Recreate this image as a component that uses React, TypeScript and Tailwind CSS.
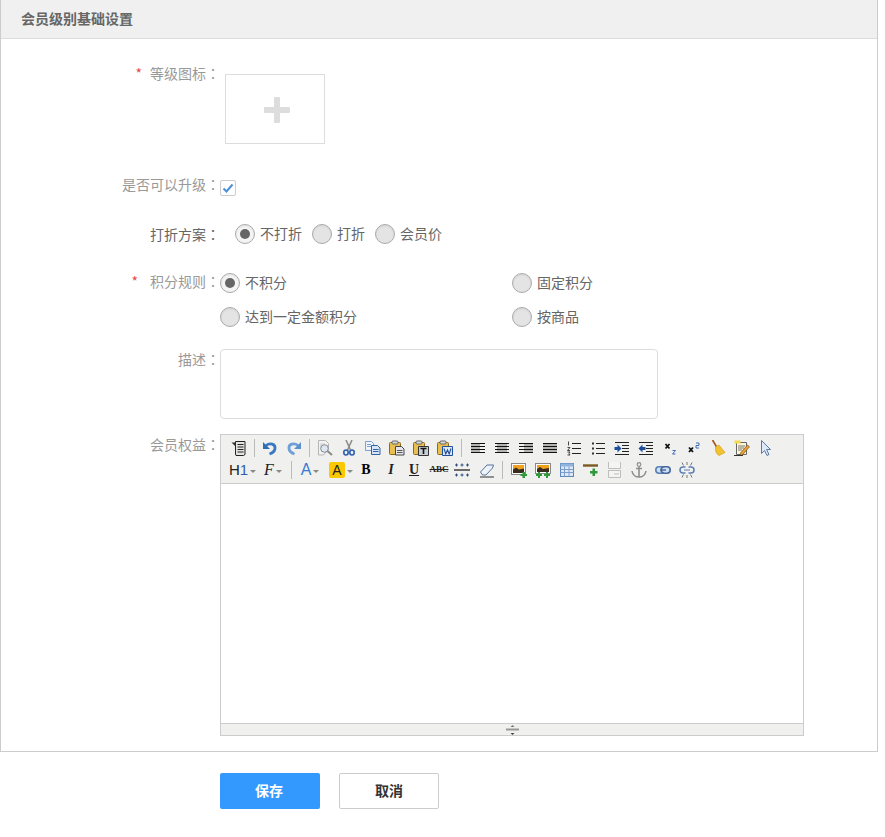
import * as React from "react"

const cjk = "font-['Microsoft_YaHei','Noto_Sans_CJK_SC',sans-serif]"

function Ico({ children }: { children: React.ReactNode }) {
  return (
    <svg width="16" height="16" viewBox="0 0 16 16" fill="none">
      {children}
    </svg>
  )
}

function Lines({ rows }: { rows: [number, number][] }) {
  return (
    <Ico>
      {rows.map(([x1, x2], i) => (
        <path key={i} d={`M${x1} ${3.5 + i * 1.5}H${x2}`} stroke={i % 2 ? "#777" : "#111"} strokeWidth="1" />
      ))}
    </Ico>
  )
}

const clip = (
  <>
    <rect x=".5" y="2.500" width="11" height="12" rx="1" fill="#e9bf52" stroke="#8a6a1f" />
    <rect x="3" y="1" width="6" height="3" rx="1" fill="#d9d9d9" stroke="#666" />
  </>
)

const icons: Record<string, React.ReactNode> = {
  source: (
    <Ico>
      <path d="M4.500 1.500h9.500v12.500c0 .8-.7 1.500-1.500 1.500h-7.500l-.5-1.500z" fill="#e4e4e4" stroke="#222" />
      <path d="M6.500 4.500h6M6.500 7h6M6.500 9.500h6M6.500 12h6" stroke="#222" />
      <path d="M.5 2.500l4 0v4z" fill="#333" />
    </Ico>
  ),
  undo: (
    <Ico>
      <path d="M4 5.500c4-3 9.500-1.500 9 3 -.3 2.800-2.500 4.500-5.500 5.500" stroke="#3b78c2" strokeWidth="2.800" />
      <path d="M1 2v7h7z" fill="#2f6db5" />
    </Ico>
  ),
  redo: (
    <Ico>
      <path d="M12 5.500c-4-3-9.500-1.500-9 3 .3 2.800 2.500 4.500 5.500 5.500" stroke="#6f9fd8" strokeWidth="2.800" />
      <path d="M15 2v7h-7z" fill="#5c8fcc" />
    </Ico>
  ),
  preview: (
    <Ico>
      <path d="M1.500.5h7l3 3v6l-5 5.500h-5z" fill="#f2f2f2" stroke="#b5b5b5" />
      <path d="M3 4h5M3 6h3M3 8h2" stroke="#ccc" />
      <circle cx="7.500" cy="8.500" r="3.800" fill="#dbe7f3" stroke="#8a8a8a" />
      <path d="M10.500 11l4.500 4" stroke="#8a8a8a" strokeWidth="2" />
    </Ico>
  ),
  cut: (
    <Ico>
      <path d="M5 0l4.500 10M11 0l-4.500 10" stroke="#8a8a8a" strokeWidth="1.500" />
      <ellipse cx="5" cy="12.500" rx="2.200" ry="2.500" stroke="#2f5fb0" strokeWidth="1.600" />
      <ellipse cx="11" cy="12.500" rx="2.200" ry="2.500" stroke="#2f5fb0" strokeWidth="1.600" />
    </Ico>
  ),
  copy: (
    <Ico>
      <path d="M.5 1.500h6l2 2v7h-8z" fill="#eef4fb" stroke="#7d9fcc" />
      <path d="M2 4.500h4M2 6.500h4" stroke="#7d9fcc" />
      <path d="M6.500 5.500h6l2.500 2.500v6.500h-8.500z" fill="#d5e4f6" stroke="#34639f" />
      <path d="M8 9.500h5.500M8 11.500h5.500" stroke="#34639f" />
    </Ico>
  ),
  paste: (
    <Ico>
      {clip}
      <path d="M6.500 6.500h6l2.500 2.500v6h-8.500z" fill="#e4e8ee" stroke="#444" />
      <path d="M8 10.500h5.500M8 12.500h5.500" stroke="#555" />
    </Ico>
  ),
  pasteText: (
    <Ico>
      {clip}
      <path d="M5.500 6.500h10v9h-10z" fill="#c9ced6" stroke="#333" />
      <path d="M7.500 8.500h6M10.500 8.500v5.500" stroke="#111" strokeWidth="1.600" />
    </Ico>
  ),
  pasteWord: (
    <Ico>
      {clip}
      <path d="M5.500 6.500h10v9h-10z" fill="#dfe8f5" stroke="#1f4f9a" />
      <path d="M7 8.500l1.800 5.500 1.700-4 1.700 4 1.800-5.500" stroke="#1f4f9a" strokeWidth="1.100" />
    </Ico>
  ),
  left: <Lines rows={[[1, 15], [1, 10], [1, 15], [1, 10], [1, 15], [1, 10], [1, 15]]} />,
  center: <Lines rows={[[1, 15], [3, 13], [1, 15], [3, 13], [1, 15], [3, 13], [1, 15]]} />,
  right: <Lines rows={[[1, 15], [6, 15], [1, 15], [6, 15], [1, 15], [6, 15], [1, 15]]} />,
  justify: <Lines rows={[[1, 15], [1, 15], [1, 15], [1, 15], [1, 15], [1, 15], [1, 15]]} />,
  ol: (
    <Ico>
      <path d="M6 3.500h9M6 8.500h9M6 13.500h9" stroke="#222" />
      <path d="M2.500 1.500v4M1.500 7.500h2.500l-2.500 3h2.500M1.500 12h2.500l-1 1.500 1 1.500h-2.500" stroke="#333" strokeWidth=".9" />
    </Ico>
  ),
  ul: (
    <Ico>
      <path d="M6 3.500h9M6 8.500h9M6 13.500h9" stroke="#222" />
      <path d="M2 2.500h2v2h-2zM2 7.500h2v2h-2zM2 12.500h2v2h-2z" fill="#333" />
    </Ico>
  ),
  indent: (
    <Ico>
      <path d="M1 2.500h14M8 5.500h7M8 8.500h7M8 11.500h7M1 14.500h14" stroke="#222" />
      <path d="M.5 7h3v-2.500l4 4-4 4v-2.500h-3z" fill="#1f4f9a" />
    </Ico>
  ),
  outdent: (
    <Ico>
      <path d="M1 2.500h14M8 5.500h7M8 8.500h7M8 11.500h7M1 14.500h14" stroke="#222" />
      <path d="M7.500 7h-3v-2.500l-4 4 4 4v-2.500h3z" fill="#1f4f9a" />
    </Ico>
  ),
  sub: (
    <Ico>
      <path d="M3.500 4l4 4.500M7.500 4l-4 4.500" stroke="#111" strokeWidth="1.800" />
      <path d="M10.500 10.500h3l-3 3.500h3" stroke="#2f5fb0" strokeWidth=".9" />
    </Ico>
  ),
  sup: (
    <Ico>
      <path d="M3 7.500l4 4.500M7 7.500l-4 4.500" stroke="#111" strokeWidth="1.800" />
      <path d="M10 3h3v2.500h-3v2.500h3" stroke="#2f5fb0" strokeWidth=".9" />
    </Ico>
  ),
  broom: (
    <Ico>
      <path d="M2.500 0l4.500 7.500" stroke="#a5521c" strokeWidth="1.600" />
      <path d="M5.500 7l3.500-2 6 7.500-6 3c-2.500-1.500-4-4-3.500-8.500z" fill="#f2c230" stroke="#d49c1a" strokeWidth=".6" />
    </Ico>
  ),
  template: (
    <Ico>
      <path d="M2.500 2.500h10v12h-10z" fill="#fff6d6" stroke="#666" />
      <path d="M.5 .5h6v3h-6z" fill="#f7da4f" />
      <path d="M4 6h7M4 8h6M4 10h4" stroke="#777" />
      <path d="M6.500 13l7-8 2 1.800-7 8-2.500.7z" fill="#e7a338" stroke="#7a4f17" strokeWidth=".7" />
      <path d="M0 15.500h9" stroke="#333" />
    </Ico>
  ),
  cursor: (
    <Ico>
      <path d="M3.500 .5l9 9h-4l2.500 5-2 1-2.500-5-3 3z" fill="#dfe9f7" stroke="#5b7aa6" />
    </Ico>
  ),
  image: (
    <Ico>
      <rect x=".5" y="1.500" width="14" height="11" fill="#fff" stroke="#888" />
      <rect x="2" y="3" width="11" height="8" fill="#f0a21f" />
      <path d="M2 7.500l3-2 3 2 5-1v4.500h-11z" fill="#3a2c1c" />
      <path d="M9.500 12h2v-2h2.500v2h2v2h-2v2h-2.500v-2h-2z" fill="#2f9a3a" />
    </Ico>
  ),
  images: (
    <Ico>
      <rect x=".5" y="1.500" width="15" height="10" fill="#fff" stroke="#888" />
      <rect x="2" y="3" width="12" height="7" fill="#f0a21f" />
      <path d="M2 7l3-2 3 2 6-1v4h-12z" fill="#3a2c1c" />
      <path d="M1 12h2v-2h2v2h2v2h-2v2h-2v-2h-2zM9 12h2v-2h2v2h2v2h-2v2h-2v-2h-2z" fill="#2f9a3a" />
    </Ico>
  ),
  table: (
    <Ico>
      <rect x="1.500" y="1.500" width="13" height="13" fill="#dce8f7" stroke="#5c86bd" />
      <path d="M1.500 1.500h13v3h-13z" fill="#8fb2de" />
      <path d="M1.500 7.500h13M1.500 10.500h13M5.500 4.500v10M10 4.500v10" stroke="#7c9ecb" />
    </Ico>
  ),
  hr: (
    <Ico>
      <path d="M0 3.500h15" stroke="#7a5a22" strokeWidth="2.400" />
      <path d="M7 9h2.500v-2.500h2.500v2.500h2.500v2.500h-2.500v2.500h-2.500v-2.500h-2.500z" fill="#2f9a3a" />
    </Ico>
  ),
  pagebreak: (
    <Ico>
      <path d="M1.500 0v6.500h12v-6.500M1.500 15.500v-7h12v7z" fill="#f4f4f2" stroke="#bdbdbd" />
      <path d="M7 12h5" stroke="#bdbdbd" />
    </Ico>
  ),
  anchor: (
    <Ico>
      <circle cx="8" cy="2.500" r="1.800" stroke="#8e8e8e" strokeWidth="1.200" />
      <path d="M8 4.500v10.500M5 6.500h6M1 9c.5 3.500 3.500 6 7 6s6.500-2.500 7-6" stroke="#8e8e8e" strokeWidth="1.600" />
    </Ico>
  ),
  link: (
    <Ico>
      <rect x=".8" y="4.800" width="9" height="6.400" rx="3.200" fill="#cfdff2" stroke="#5a7fb5" strokeWidth="1.600" />
      <rect x="6.200" y="4.800" width="9" height="6.400" rx="3.200" fill="#cfdff2" stroke="#44669b" strokeWidth="1.600" />
      <path d="M5 8h6" stroke="#44669b" strokeWidth="1.400" />
    </Ico>
  ),
  unlink: (
    <Ico>
      <path d="M6.500 5h-2.500a3 3 0 0 0 0 6h2.500M9.500 5h2.500a3 3 0 0 1 0 6h-2.500" stroke="#5a7fb5" strokeWidth="1.500" />
      <path d="M5 8h6" stroke="#5a7fb5" />
      <path d="M8 0v3M8 13v3M3 .5l1.500 3M13 .5l-1.500 3M3 15.500l1.500-3M13 15.500l-1.500-3" stroke="#555" strokeWidth=".8" />
    </Ico>
  ),
}

function ToolBtn({ name, className }: { name: string; className?: string }) {
  return <div className={`flex h-[22px] w-6 shrink-0 items-center justify-center ${className ?? ""}`}>{icons[name]}</div>
}

function Sep({ className }: { className?: string }) {
  return <div className={`h-[18px] w-px shrink-0 bg-[#bbb] ${className ?? "mx-[3px]"}`} />
}

function Caret() {
  return <span className="ml-[2px] mt-[3px] h-0 w-0 border-x-[3px] border-t-[3px] border-x-transparent border-t-[#888]" />
}

function TextBtn({ children, className }: { children: React.ReactNode; className: string }) {
  return <div className={`flex h-[22px] shrink-0 items-center justify-center ${className}`}>{children}</div>
}

function Radio({ checked }: { checked?: boolean }) {
  return (
    <span
      className={`flex h-5 w-5 shrink-0 items-center justify-center rounded-full border border-[#aaa] shadow-[inset_0_1px_2px_rgba(0,0,0,0.08)] ${
        checked ? "bg-[#f4f4f4]" : "bg-[#e4e4e4]"
      }`}
    >
      {checked && <span className="h-[10px] w-[10px] rounded-full bg-[#666]" />}
    </span>
  )
}

function RadioItem({ label, checked }: { label: string; checked?: boolean }) {
  return (
    <div className="flex h-5 items-center gap-[5px]">
      <Radio checked={checked} />
      <span className="mb-[2px] text-sm leading-5 text-[#666]">{label}</span>
    </div>
  )
}

function Label({
  text,
  star,
  dark,
  offset = "-mt-px",
}: {
  text: string
  star?: "near" | "far"
  dark?: boolean
  offset?: string
}) {
  return (
    <div className={`w-[220px] shrink-0 text-right text-sm leading-5 ${offset} ${dark ? "text-[#666]" : "text-[#999]"}`}>
      {star && <span className={`text-[#e8484d] ${star === "near" ? "mr-2" : "mr-3"}`}>*</span>}
      {text}
      <span className="font-['Noto_Sans_CJK_TC',sans-serif]">：</span>
    </div>
  )
}

export default function App() {
  return (
    <div className={`h-[837px] w-[885px] bg-white ${cjk}`}>
      <div className="h-[752px] w-[878px] border-x border-b border-[#ccc]">
        <div className="flex h-[39px] items-center border-b border-[#ddd] bg-[#f0f0f0] pb-[2px] pl-5 text-sm font-bold text-[#666]">
          会员级别基础设置
        </div>

        <div className="-ml-px flex pt-[25px]">
          <Label text="等级图标" star="near" />
          <div className="ml-[5px] mt-[10px] flex h-[70px] w-[100px] items-center justify-center border border-[#ddd]">
            <div className="relative ml-[3px] mt-[1px] h-[26px] w-[26px]">
              <div className="absolute left-0 top-[10px] h-[6px] w-[26px] rounded-[1px] bg-[#ddd]" />
              <div className="absolute left-[10px] top-0 h-[26px] w-[6px] rounded-[1px] bg-[#ddd]" />
            </div>
          </div>
        </div>

        <div className="-ml-px mt-[31px] flex">
          <Label text="是否可以升级" />
          <span className="mt-[5px] flex h-4 w-4 items-center justify-center rounded-[2px] border border-[#ccc] bg-white">
            <svg width="12" height="12" viewBox="0 0 12 12" fill="none">
              <path d="M1.500 6.500l3 3 6-7" stroke="#4a8fd8" strokeWidth="2" />
            </svg>
          </span>
        </div>

        <div className="-ml-px mt-[28px] flex">
          <Label text="打折方案" dark offset="mt-0" />
          <div className="ml-[15px] flex gap-[10px]">
            <RadioItem label="不打折" checked />
            <RadioItem label="打折" />
            <RadioItem label="会员价" />
          </div>
        </div>

        <div className="-ml-px mt-[29px] flex">
          <Label text="积分规则" star="far" offset="-mt-[2px]" />
          <div className="grid h-[54px] w-[400px] grid-cols-[292px_1fr] gap-y-[14px]">
            <RadioItem label="不积分" checked />
            <RadioItem label="固定积分" />
            <RadioItem label="达到一定金额积分" />
            <RadioItem label="按商品" />
          </div>
        </div>

        <div className="-ml-px mt-[22px] flex">
          <Label text="描述" offset="mt-0" />
          <div className="h-[70px] w-[438px] rounded-[4px] border border-[#ddd]" />
        </div>

        <div className="-ml-px mt-[15px] flex">
          <Label text="会员权益" offset="mt-0" />
          <div className="flex h-[302px] w-[584px] flex-col border border-[#ccc]">
            <div className="h-[49px] border-b border-[#ccc] bg-[#f0f0ee] pl-[6px] pt-[2px]">
              <div className="flex h-[22px] items-center">
                <ToolBtn name="source" />
                <Sep />
                <ToolBtn name="undo" />
                <ToolBtn name="redo" />
                <Sep />
                <ToolBtn name="preview" />
                <ToolBtn name="cut" />
                <ToolBtn name="copy" />
                <ToolBtn name="paste" />
                <ToolBtn name="pasteText" />
                <ToolBtn name="pasteWord" />
                <Sep className="mx-1" />
                <ToolBtn name="left" />
                <ToolBtn name="center" />
                <ToolBtn name="right" />
                <ToolBtn name="justify" />
                <ToolBtn name="ol" />
                <ToolBtn name="ul" />
                <ToolBtn name="indent" />
                <ToolBtn name="outdent" />
                <ToolBtn name="sub" />
                <ToolBtn name="sup" />
                <ToolBtn name="broom" />
                <ToolBtn name="template" />
                <ToolBtn name="cursor" />
              </div>
              <div className="flex h-[22px] items-center">
                <TextBtn className="w-[31px] font-['Liberation_Sans',sans-serif] text-[15px] text-[#222]">
                  H<span className="text-[#2f5fb0]">1</span>
                  <Caret />
                </TextBtn>
                <TextBtn className="w-[30px] font-['Liberation_Serif',serif] text-base italic text-[#222]">
                  F
                  <Caret />
                </TextBtn>
                <Sep />
                <TextBtn className="w-[30px] font-['Liberation_Sans',sans-serif] text-base text-[#3a78d4]">
                  A
                  <Caret />
                </TextBtn>
                <TextBtn className="ml-[2px] w-7 font-['Liberation_Sans',sans-serif] text-sm text-[#222]">
                  <span className="flex h-4 w-4 items-center justify-center rounded-[2px] bg-[#fcc800]">A</span>
                  <Caret />
                </TextBtn>
                <TextBtn className="w-[22px] font-['Liberation_Serif',serif] text-sm font-bold text-black">B</TextBtn>
                <TextBtn className="ml-[2px] w-6 font-['Liberation_Serif',serif] text-sm font-bold italic text-[#222]">I</TextBtn>
                <TextBtn className="w-[22px] font-['Liberation_Serif',serif] text-sm font-bold text-[#222] underline">U</TextBtn>
                <TextBtn className="w-7 font-['Liberation_Serif',serif] text-[9px] font-bold text-[#222] line-through">ABC</TextBtn>
                <div className="flex h-[22px] w-[18px] shrink-0 items-center justify-center">
                  <Ico>
                    <path d="M0 8h16" stroke="#333" strokeWidth="1.400" />
                    <path d="M1 3h3M2.500 1.500v3M6.500 3h3M8 1.500v3M12 3h3M13.500 1.500v3M1 13h3M2.500 11.500v3M6.500 13h3M8 11.500v3M12 13h3M13.500 11.500v3" stroke="#2f4f80" />
                  </Ico>
                </div>
                <div className="ml-1 flex h-[22px] w-6 shrink-0 items-center justify-center">
                  <Ico>
                    <path d="M1.500 10l6.500-7h6.500l-1 3-6.500 7h-3.500z" fill="#eef3fa" stroke="#54729f" />
                    <path d="M1 15h14" stroke="#333" />
                  </Ico>
                </div>
                <Sep />
                <ToolBtn name="image" className="ml-px" />
                <ToolBtn name="images" />
                <ToolBtn name="table" />
                <ToolBtn name="hr" />
                <ToolBtn name="pagebreak" />
                <ToolBtn name="anchor" />
                <ToolBtn name="link" />
                <ToolBtn name="unlink" />
              </div>
            </div>
            <div className="flex-1 bg-white" />
            <div className="flex h-3 items-center justify-center border-t border-[#ccc] bg-[#f0f0ee]">
              <svg width="15" height="10" viewBox="0 0 15 10" fill="none">
                <path d="M7.500 0l2 2h-4z" fill="#777" />
                <path d="M1 4.500h13" stroke="#999" strokeWidth="2" />
                <path d="M7.500 10l2-2h-4z" fill="#444" />
              </svg>
            </div>
          </div>
        </div>
      </div>

      <div className="ml-[220px] mt-[21px] flex gap-[19px]">
        <button className="h-9 w-[100px] rounded-[2px] bg-[#3399ff] pb-[2px] pr-[2px] text-sm font-bold text-white">保存</button>
        <button className="h-9 w-[100px] rounded-[2px] border border-[#ccc] bg-white pb-[2px] text-sm font-bold text-[#333]">取消</button>
      </div>
    </div>
  )
}
